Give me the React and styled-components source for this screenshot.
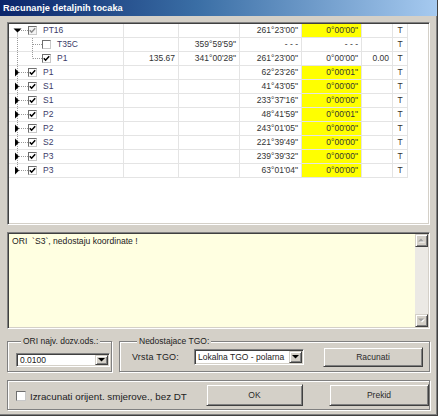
import React from 'react';
import styled, { createGlobalStyle } from 'styled-components';

const Global = createGlobalStyle`
  html, body { margin: 0; padding: 0; background: #d4d0c8; }
  body { font-family: "Liberation Sans", Arial, sans-serif; }
  * { box-sizing: border-box; }
`;

const Window = styled.div`
  width: 438px;
  height: 416px;
  background: #d4d0c8;
  border-right: 1px solid #404040;
  border-bottom: 1px solid #404040;
  box-shadow: inset -1px -1px 0 #808080;
  display: flex;
  flex-direction: column;
  overflow: hidden;
`;

const TitleBar = styled.div`
  height: 16px;
  flex: none;
  display: flex;
  align-items: center;
  padding-left: 3px;
  background: linear-gradient(to right, #0a246a 0%, #3a6ea5 45%, #a6caf0 100%);
  color: #fff;
  font-weight: bold;
  font-size: 9.2px;
  letter-spacing: 0.05px;
`;

const Body = styled.div`
  flex: 1;
  display: flex;
  flex-direction: column;
  padding: 6px 7px 0 7px;
`;

const Sunken = styled.div`
  border: 1px solid;
  border-color: #808080 #ffffff #ffffff #808080;
  box-shadow: inset 1px 1px 0 #404040, inset -1px -1px 0 #d4d0c8;
  padding: 1px;
`;

const GridPanel = styled(Sunken)`
  height: 203px;
  flex: none;
  background: #fff;
  overflow: hidden;
`;

const Row = styled.div`
  display: grid;
  grid-template-columns: 115px 55px 61px 62px 60px 31px 15px;
  height: 14px;
  font-size: 8.5px;
  color: #333;
`;

const Cell = styled.div`
  border-right: 1px solid #e4e4e4;
  border-bottom: 1px solid #e4e4e4;
  line-height: 13px;
  padding-right: 3px;
  text-align: ${p => (p.$align || 'right')};
  padding-left: ${p => (p.$align === 'center' ? '3px' : '0')};
  background: ${p => (p.$yellow ? '#ffff00' : 'transparent')};
  white-space: nowrap;
  overflow: hidden;
`;

const TreeCell = styled.div`
  border-right: 1px solid #e4e4e4;
  border-bottom: 1px solid #e4e4e4;
  display: flex;
  align-items: center;
  height: 14px;
  overflow: hidden;
`;

const Lines = styled.svg`
  flex: none;
  display: block;
  align-self: flex-start;
`;

const Check = styled.span`
  flex: none;
  width: 9px;
  height: 9px;
  border: 1px solid;
  border-color: #6e6e6e #c8c8c8 #c8c8c8 #6e6e6e;
  background: ${p => (p.$gray ? '#f4f4f4' : '#fff')};
  display: flex;
  align-items: center;
  justify-content: center;
`;

const Label = styled.span`
  margin-left: 6px;
  line-height: 13px;
  color: #3a3a68;
  white-space: nowrap;
`;

const Memo = styled(Sunken)`
  margin-top: 7px;
  height: 97px;
  flex: none;
  background: #ffffe1;
  display: flex;
`;

const MemoText = styled.div`
  flex: 1;
  padding: 2px 3px;
  font-size: 8.6px;
  line-height: 10px;
  color: #222;
  white-space: pre;
`;

const ScrollBar = styled.div`
  width: 13px;
  flex: none;
  display: flex;
  flex-direction: column;
  background: #ebe9e4;
`;

const Raised = styled.div`
  border: 1px solid;
  border-color: #d4d0c8 #404040 #404040 #d4d0c8;
  box-shadow: inset 1px 1px 0 #ffffff, inset -1px -1px 0 #808080;
  background: #d4d0c8;
  display: flex;
  align-items: center;
  justify-content: center;
`;

const ScrollBtn = styled(Raised)`
  width: 13px;
  height: 13px;
  flex: none;
`;

const Track = styled.div`
  flex: 1;
`;

const GroupRow = styled.div`
  margin-top: 7px;
  display: flex;
  gap: 7px;
  height: 36px;
  flex: none;
`;

const Group = styled.fieldset`
  margin: 0;
  min-width: 0;
  border: 1px solid #808080;
  box-shadow: inset 1px 1px 0 #fff, 1px 1px 0 #fff;
  padding: ${p => p.$pad || '0'};
  width: ${p => (p.$w ? p.$w + 'px' : 'auto')};
  flex: ${p => (p.$w ? 'none' : '1')};
  display: flex;
  align-items: center;
`;

const Legend = styled.legend`
  margin-left: 5px;
  padding: 0 2px;
  font-size: 8.5px;
  line-height: 10px;
  color: #222;
  background: #d4d0c8;
`;

const Combo = styled(Sunken)`
  width: ${p => p.$w}px;
  height: ${p => p.$h}px;
  flex: none;
  background: #fff;
  display: flex;
  align-items: stretch;
`;

const ComboText = styled.div`
  flex: 1;
  font-size: 8.5px;
  color: #222;
  display: flex;
  align-items: center;
  padding-left: 2px;
  white-space: nowrap;
  overflow: hidden;
`;

const DropBtn = styled(Raised)`
  width: 13px;
  flex: none;
`;

const FieldLabel = styled.span`
  font-size: 9px;
  color: #222;
  letter-spacing: 0.2px;
  margin-right: 15px;
  white-space: nowrap;
`;

const Button = styled(Raised)`
  width: ${p => p.$w}px;
  height: ${p => p.$h}px;
  flex: none;
  font-size: 8.5px;
  color: #2a2a2a;
  margin-left: ${p => p.$ml || 0}px;
`;

const BottomGroup = styled.div`
  margin-top: 8px;
  height: 30px;
  flex: none;
  border: 1px solid #808080;
  box-shadow: inset 1px 1px 0 #fff, 1px 1px 0 #fff;
  display: flex;
  align-items: center;
  padding: 0 0 0 8px;
`;

const BigCheck = styled(Check)`
  width: 10px;
  height: 10px;
  margin-top: 2px;
`;

const CheckLabel = styled.span`
  margin-left: 4px;
  margin-top: 2px;
  font-size: 9.8px;
  color: #222;
  white-space: nowrap;
`;

const Spacer = styled.div`
  flex: 1;
`;

const TickMark = ({ gray }) => (
  <svg width="7" height="7" viewBox="0 0 7 7">
    <polyline points="0.8,3.2 2.6,5.2 6.2,1.2" fill="none" stroke={gray ? '#8a8a8a' : '#000'} strokeWidth="1.5" />
  </svg>
);

const CheckBox = ({ state }) => (
  <Check $gray={state === 'gray'}>
    {state !== 'off' && <TickMark gray={state === 'gray'} />}
  </Check>
);

const dot = { stroke: '#9a9a9a', strokeWidth: 1, strokeDasharray: '1 1', fill: 'none' };

const TreeLines = ({ r }) => {
  if (r.level === 0) {
    const y1 = r.pos === 'first' ? 6.5 : 0;
    const y2 = r.pos === 'last' ? 6.5 : 13;
    return (
      <Lines width="19" height="13" viewBox="0 0 19 13">
        <line x1="8.5" y1={y1} x2="8.5" y2={y2} style={dot} />
        <line x1="10" y1="6.5" x2="19" y2="6.5" style={dot} />
        {r.toggle === 'open' ? (
          <polygon points="4.5,4.5 12.5,4.5 8.5,8.5" fill="#000" />
        ) : (
          <polygon points="6,2.5 10,6.5 6,10.5" fill="#000" />
        )}
      </Lines>
    );
  }
  return (
    <Lines width="33" height="13" viewBox="0 0 33 13">
      <line x1="8.5" y1="0" x2="8.5" y2="13" style={dot} />
      <line x1="23.5" y1="0" x2="23.5" y2={r.lastChild ? 6.5 : 13} style={dot} />
      <line x1="24" y1="6.5" x2="33" y2="6.5" style={dot} />
    </Lines>
  );
};

const rows = [
  { label: 'PT16', level: 0, toggle: 'open', pos: 'first', check: 'gray', c4: "261°23'00\"", c5: "0°00'00\"", y: true },
  { label: 'T35C', level: 1, check: 'off', c3: "359°59'59\"", c4: '- - -', c5: '- - -' },
  { label: 'P1', level: 1, lastChild: true, check: 'on', c2: '135.67', c3: "341°00'28\"", c4: "261°23'00\"", c5: "0°00'00\"", c6: '0.00' },
  { label: 'P1', level: 0, toggle: 'closed', check: 'on', c4: "62°23'26\"", c5: "0°00'01\"", y: true },
  { label: 'S1', level: 0, toggle: 'closed', check: 'on', c4: "41°43'05\"", c5: "0°00'00\"", y: true },
  { label: 'S1', level: 0, toggle: 'closed', check: 'on', c4: "233°37'16\"", c5: "0°00'00\"", y: true },
  { label: 'P2', level: 0, toggle: 'closed', check: 'on', c4: "48°41'59\"", c5: "0°00'01\"", y: true },
  { label: 'P2', level: 0, toggle: 'closed', check: 'on', c4: "243°01'05\"", c5: "0°00'00\"", y: true },
  { label: 'S2', level: 0, toggle: 'closed', check: 'on', c4: "221°39'49\"", c5: "0°00'00\"", y: true },
  { label: 'P3', level: 0, toggle: 'closed', check: 'on', c4: "239°39'32\"", c5: "0°00'00\"", y: true },
  { label: 'P3', level: 0, toggle: 'closed', pos: 'last', check: 'on', c4: "63°01'04\"", c5: "0°00'00\"", y: true },
];

const ArrowDown = ({ color = '#000' }) => (
  <svg width="7" height="4" viewBox="0 0 7 4">
    <polygon points="0,0 7,0 3.5,3.5" fill={color} />
  </svg>
);

const ArrowUpGray = () => (
  <svg width="7" height="5" viewBox="0 0 7 5">
    <polygon points="1,4.5 7,4.5 4,1.5" fill="#fff" />
    <polygon points="0,3.5 6,3.5 3,0.5" fill="#a0a0a0" />
  </svg>
);

const ArrowDownGray = () => (
  <svg width="7" height="5" viewBox="0 0 7 5">
    <polygon points="1,1.5 7,1.5 4,4.5" fill="#fff" />
    <polygon points="0,0.5 6,0.5 3,3.5" fill="#a0a0a0" />
  </svg>
);

export default function App() {
  return (
    <>
      <Global />
      <Window>
        <TitleBar>Racunanje detaljnih tocaka</TitleBar>
        <Body>
          <GridPanel>
            {rows.map((r, i) => (
              <Row key={i}>
                <TreeCell>
                  <TreeLines r={r} />
                  <CheckBox state={r.check} />
                  <Label>{r.label}</Label>
                </TreeCell>
                <Cell>{r.c2 || ''}</Cell>
                <Cell>{r.c3 || ''}</Cell>
                <Cell>{r.c4 || ''}</Cell>
                <Cell $yellow={r.y}>{r.c5 || ''}</Cell>
                <Cell>{r.c6 || ''}</Cell>
                <Cell $align="center">T</Cell>
              </Row>
            ))}
          </GridPanel>

          <Memo>
            <MemoText>{'ORI  `S3`, nedostaju koordinate !'}</MemoText>
            <ScrollBar>
              <ScrollBtn><ArrowUpGray /></ScrollBtn>
              <Track />
              <ScrollBtn><ArrowDownGray /></ScrollBtn>
            </ScrollBar>
          </Memo>

          <GroupRow>
            <Group $w={105} $pad="7px 0 4px 8px">
              <Legend>ORI najv. dozv.ods.:</Legend>
              <Combo $w={94} $h={14}>
                <ComboText>0.0100</ComboText>
                <DropBtn><ArrowDown /></DropBtn>
              </Combo>
            </Group>
            <Group $pad="1px 0 4px 12px">
              <Legend>Nedostajace TGO:</Legend>
              <FieldLabel>Vrsta TGO:</FieldLabel>
              <Combo $w={110} $h={16}>
                <ComboText>Lokalna TGO - polarna</ComboText>
                <DropBtn><ArrowDown /></DropBtn>
              </Combo>
              <Button $w={100} $h={20} $ml={19}>Racunati</Button>
            </Group>
          </GroupRow>

          <BottomGroup>
            <BigCheck />
            <CheckLabel>Izracunati orijent. smjerove., bez DT</CheckLabel>
            <Spacer />
            <Button $w={97} $h={22}>OK</Button>
            <Button $w={100} $h={22} $ml={26}>Prekid</Button>
          </BottomGroup>
        </Body>
      </Window>
    </>
  );
}
